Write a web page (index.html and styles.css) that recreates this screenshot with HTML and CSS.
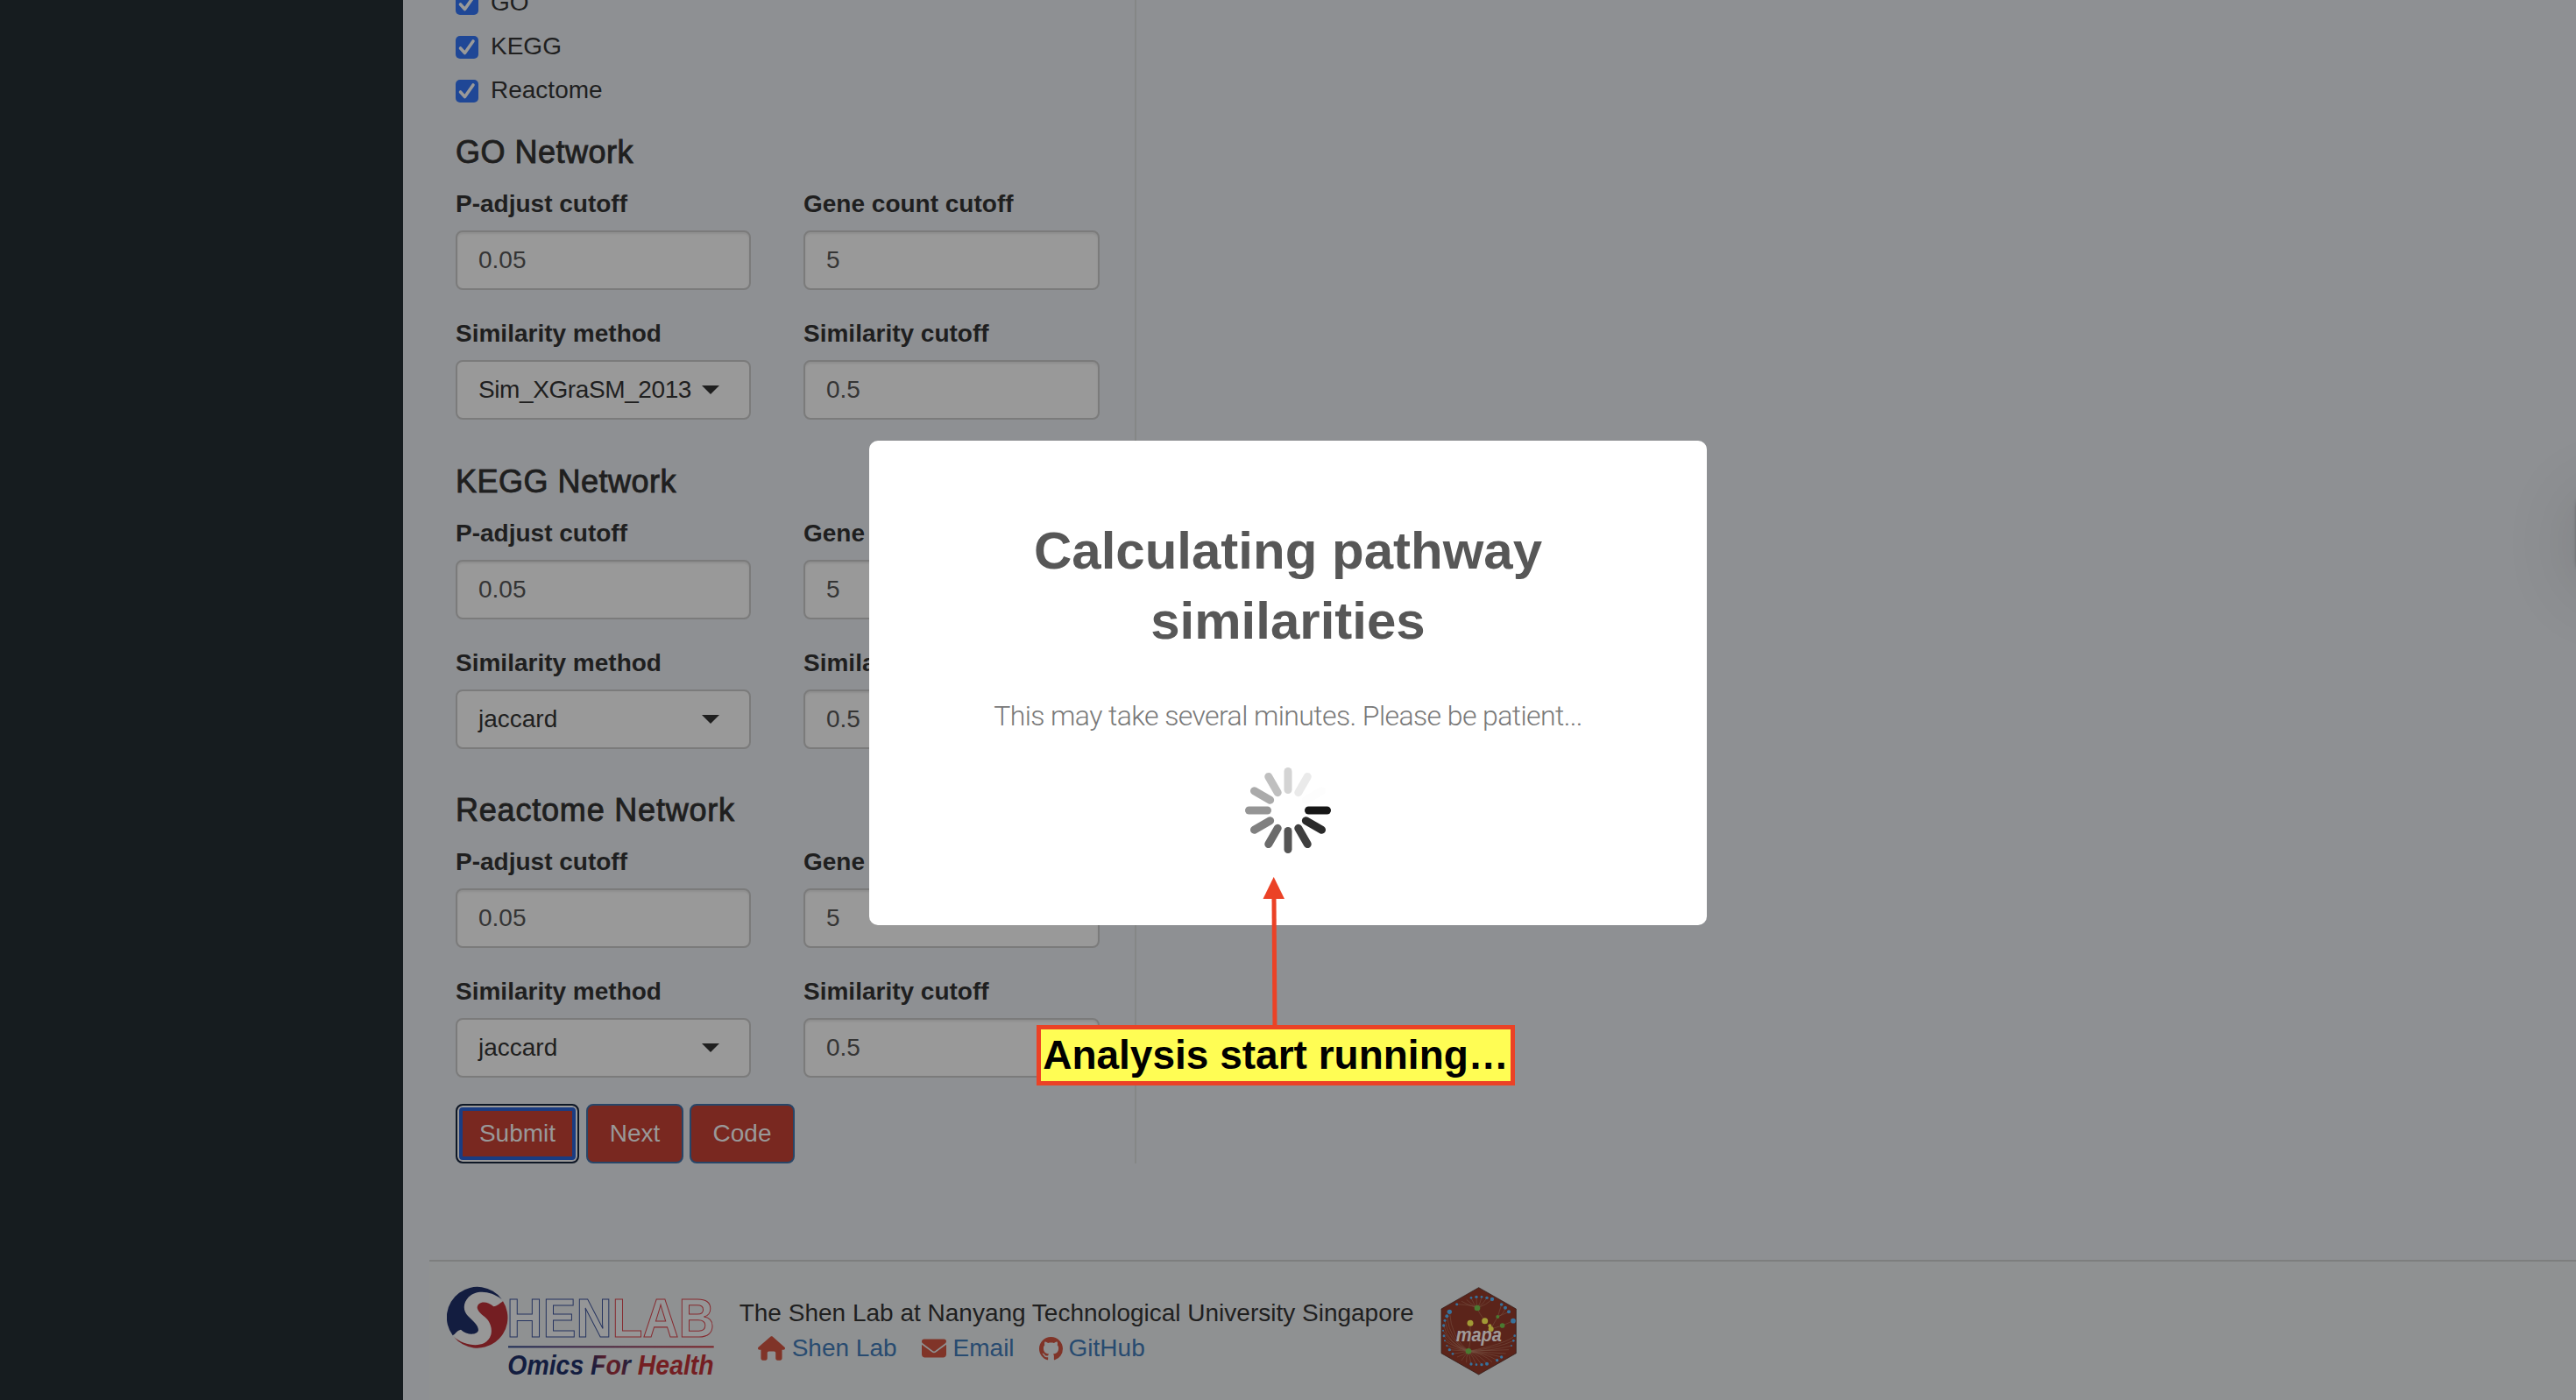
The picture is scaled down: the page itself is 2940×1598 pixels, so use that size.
FILE: index.html
```html
<!DOCTYPE html>
<html lang="en">
<head>
<meta charset="utf-8">
<title>MAPA</title>
<link rel="stylesheet" href="styles.css">
</head>
<body>
<div class="app">
  <aside class="sidebar"></aside>
  <main class="content">
    <div class="workspace">
      <form class="panel">
        <div class="checks">
          <label class="check"><svg class="box" viewBox="0 0 26 26"><path d="M5.500 14 10.500 19.500 20 6"/></svg>GO</label>
          <label class="check"><svg class="box" viewBox="0 0 26 26"><path d="M5.500 14 10.500 19.500 20 6"/></svg>KEGG</label>
          <label class="check"><svg class="box" viewBox="0 0 26 26"><path d="M5.500 14 10.500 19.500 20 6"/></svg>Reactome</label>
        </div>
        <section class="network">
          <h4>GO Network</h4>
          <div class="fields">
            <div class="field"><label>P-adjust cutoff</label><div class="input">0.05</div></div>
            <div class="field"><label>Gene count cutoff</label><div class="input">5</div></div>
            <div class="field"><label>Similarity method</label><div class="input select"><span class="tight">Sim_XGraSM_2013</span><i class="caret"></i></div></div>
            <div class="field"><label>Similarity cutoff</label><div class="input">0.5</div></div>
          </div>
        </section>
        <section class="network">
          <h4>KEGG Network</h4>
          <div class="fields">
            <div class="field"><label>P-adjust cutoff</label><div class="input">0.05</div></div>
            <div class="field"><label>Gene count cutoff</label><div class="input">5</div></div>
            <div class="field"><label>Similarity method</label><div class="input select"><span>jaccard</span><i class="caret"></i></div></div>
            <div class="field"><label>Similarity cutoff</label><div class="input">0.5</div></div>
          </div>
        </section>
        <section class="network">
          <h4 class="wide">Reactome Network</h4>
          <div class="fields">
            <div class="field"><label>P-adjust cutoff</label><div class="input">0.05</div></div>
            <div class="field"><label>Gene count cutoff</label><div class="input">5</div></div>
            <div class="field"><label>Similarity method</label><div class="input select"><span>jaccard</span><i class="caret"></i></div></div>
            <div class="field"><label>Similarity cutoff</label><div class="input">0.5</div></div>
          </div>
        </section>
        <div class="actions">
          <button type="button" class="btn submit">Submit</button>
          <button type="button" class="btn next">Next</button>
          <button type="button" class="btn code">Code</button>
        </div>
      </form>
    </div>
    <footer class="footer">
      <svg class="logo" viewBox="60 110 920 320">
        <defs>
          <linearGradient id="rule" gradientUnits="userSpaceOnUse" x1="270" y1="0" x2="974" y2="0"><stop offset="0" stop-color="#1c2b56"/><stop offset="1" stop-color="#7d2227"/></linearGradient>
          <linearGradient id="fade" gradientUnits="userSpaceOnUse" x1="560" y1="400" x2="690" y2="360"><stop offset="0" stop-color="#131d40"/><stop offset=".5" stop-color="#6d1f25"/><stop offset="1" stop-color="#131d40"/></linearGradient>
        </defs>
        <circle cx="166" cy="223" r="100" fill="#979797"/>
        <path fill="#131d40" d="M80 282A104 104 0 0 1 248 158C208 126 158 126 135 150C114 172 115 198 132 215C148 232 168 246 168 264C164 282 128 282 108 262C96 264 90 276 80 282Z"/>
        <path fill="#741e22" d="M252 165A104 104 0 0 1 84 287C112 312 160 322 188 308C216 292 220 258 201 230C190 215 168 206 164 188C164 164 198 162 220 183C232 182 242 172 252 165Z"/>
        <text class="wordmark" x="265" y="286" textLength="712" lengthAdjust="spacingAndGlyphs"><tspan class="navy">HEN</tspan><tspan class="crimson">LAB</tspan></text>
        <rect x="270" y="318" width="704" height="6" fill="url(#rule)"/>
        <text class="motto" x="268" y="415" textLength="706" lengthAdjust="spacingAndGlyphs"><tspan fill="#131d40">Omics </tspan><tspan fill="url(#fade)">For </tspan><tspan fill="#741e22">Health</tspan></text>
      </svg>
      <div class="about">
        <div class="org">The Shen Lab at Nanyang Technological University Singapore</div>
        <nav class="links">
          <a class="home"><svg viewBox="0 0 576 512"><path d="M575.800 255.500c0 18-15 32.100-32 32.100h-32l.7 160.200c0 2.700-.2 5.400-.5 8.100V472c0 22.100-17.900 40-40 40H416c-22.100 0-40-17.900-40-40V352c0-17.700-14.300-32-32-32H232c-17.700 0-32 14.300-32 32v120c0 22.100-17.900 40-40 40H104c-22.100 0-40-17.900-40-40V287.600H32c-18 0-32-14-32-32.100 0-9 3-17 10-24L266.400 8c7-7 15-8 22-8s15 2 21 7L564.800 231.500c8 7 12 15 11 24z"/></svg>Shen Lab</a>
          <a class="mail"><svg viewBox="0 0 512 512"><path d="M48 64C21.500 64 0 85.500 0 112c0 15.100 7.100 29.300 19.200 38.400L236.800 313.600c11.400 8.500 27 8.500 38.400 0L492.800 150.400c12.100-9.100 19.200-23.300 19.200-38.400 0-26.500-21.500-48-48-48H48zM0 176v208c0 35.300 28.700 64 64 64h384c35.300 0 64-28.700 64-64V176L294.400 339.200c-22.800 17.100-54 17.100-76.800 0L0 176z"/></svg>Email</a>
          <a class="git"><svg viewBox="0 0 16 16"><path d="M8 0C3.580 0 0 3.580 0 8c0 3.540 2.290 6.530 5.470 7.590.4.070.55-.17.55-.38 0-.19-.01-.82-.01-1.490-2.010.37-2.530-.49-2.690-.94-.09-.23-.48-.94-.82-1.130-.28-.15-.68-.52-.01-.53.63-.01 1.080.58 1.230.82.72 1.210 1.870.87 2.330.66.070-.52.28-.87.51-1.070-1.780-.2-3.640-.89-3.640-3.950 0-.87.31-1.590.82-2.150-.08-.2-.36-1.020.08-2.120 0 0 .67-.21 2.200.82.64-.18 1.320-.27 2-.27s1.360.09 2 .27c1.530-1.040 2.200-.82 2.200-.82.44 1.100.16 1.920.08 2.120.51.56.82 1.270.82 2.150 0 3.070-1.870 3.750-3.650 3.950.29.25.54.73.54 1.480 0 1.070-.01 1.930-.01 2.200 0 .21.15.46.55.38A8.010 8.010 0 0 0 16 8c0-4.420-3.580-8-8-8z"/></svg>GitHub</a>
        </nav>
      </div>
      <svg class="hex" viewBox="70 50 270 312">
        <path d="M204 58 332 131V283L204 356 76 283V131Z" fill="#5b241a" stroke="#2b1815" stroke-width="2"/>
        <g class="edges">
          <path d="M199 128Q190 118 129 115M199 128Q170 118 145 105M199 128Q175 112 162 99M199 128Q185 112 178 93M199 128Q196 110 196 90M199 128Q210 112 214 90M199 128Q222 112 232 93M199 128Q230 118 250 98M199 128 Q205 145 225 172M175 180V240L169 276M245 200 269 158 282 116M269 158 Q290 150 295 127M269 158 307 141M285 188 245 200M285 188 322 172"/>
          <path d="M169 276Q110 230 104 141M169 276Q105 240 95 156M169 276Q100 240 88 171M169 276Q100 250 84 188M169 276Q110 255 82 205M169 276Q110 260 85 223M169 276Q120 262 88 240M169 276Q120 268 95 257M169 276 104 271M169 276 115 285M169 276Q150 290 130 296M169 276Q150 300 145 308M169 276Q160 300 162 315M169 276Q174 300 178 320M169 276Q186 296 196 322M169 276Q200 296 214 322M169 276Q210 290 232 319M169 276Q220 284 250 313M169 276Q230 284 267 307M169 276Q240 284 282 296M169 276Q240 280 297 284M169 276 307 271M169 276Q250 275 316 257M169 276Q270 265 323 240M169 276Q300 250 327 223"/>
        </g>
        <g fill="#37729c"><circle cx="129" cy="115" r="4.500"/><circle cx="178" cy="93" r="4"/><circle cx="196" cy="90" r="5"/><circle cx="214" cy="90" r="4"/><circle cx="232" cy="93" r="5"/><circle cx="250" cy="98" r="6.500"/><circle cx="282" cy="116" r="5.500"/><circle cx="295" cy="127" r="6"/><circle cx="307" cy="141" r="6"/><circle cx="322" cy="172" r="8.500"/><circle cx="104" cy="141" r="8"/><circle cx="95" cy="156" r="6"/><circle cx="88" cy="171" r="4.500"/><circle cx="84" cy="188" r="5"/><circle cx="82" cy="205" r="3"/><circle cx="85" cy="223" r="4.500"/><circle cx="88" cy="240" r="3"/><circle cx="95" cy="257" r="3"/><circle cx="104" cy="271" r="5"/><circle cx="115" cy="285" r="4"/><circle cx="178" cy="320" r="5"/><circle cx="196" cy="322" r="4"/><circle cx="214" cy="322" r="5"/><circle cx="232" cy="319" r="6"/><circle cx="267" cy="307" r="5"/><circle cx="282" cy="296" r="5"/><circle cx="316" cy="257" r="3"/><circle cx="323" cy="240" r="4"/><circle cx="327" cy="223" r="4"/></g>
        <g fill="#4a7a31"><circle cx="199" cy="128" r="10"/><circle cx="269" cy="158" r="6"/><circle cx="285" cy="188" r="8.500"/><circle cx="169" cy="276" r="10"/></g>
        <g fill="#a29b35"><circle cx="175" cy="180" r="10.500"/><circle cx="225" cy="172" r="10.500"/><circle cx="242" cy="189" r="6"/><circle cx="246" cy="200" r="9"/></g>
        <text x="126" y="242" textLength="157" lengthAdjust="spacingAndGlyphs">mapa</text>
      </svg>
    </footer>
  </main>
</div>

<div class="edge-shadow"></div>

<div class="modal">
  <h2>Calculating pathway<br>similarities</h2>
  <p>This may take several minutes. Please be patient...</p>
  <svg class="spinner" viewBox="-49 -49 98 98">
    <rect x="19" y="-4.500" width="30" height="9" rx="4.500" fill="#161616"/>
    <rect x="19" y="-4.500" width="30" height="9" rx="4.500" fill="#2a2a2a" transform="rotate(30)"/>
    <rect x="19" y="-4.500" width="30" height="9" rx="4.500" fill="#3f3f3f" transform="rotate(60)"/>
    <rect x="19" y="-4.500" width="30" height="9" rx="4.500" fill="#555" transform="rotate(90)"/>
    <rect x="19" y="-4.500" width="30" height="9" rx="4.500" fill="#6b6b6b" transform="rotate(120)"/>
    <rect x="19" y="-4.500" width="30" height="9" rx="4.500" fill="#808080" transform="rotate(150)"/>
    <rect x="19" y="-4.500" width="30" height="9" rx="4.500" fill="#959595" transform="rotate(180)"/>
    <rect x="19" y="-4.500" width="30" height="9" rx="4.500" fill="#aaa" transform="rotate(210)"/>
    <rect x="19" y="-4.500" width="30" height="9" rx="4.500" fill="#bfbfbf" transform="rotate(240)"/>
    <rect x="19" y="-4.500" width="30" height="9" rx="4.500" fill="#d4d4d4" transform="rotate(270)"/>
    <rect x="19" y="-4.500" width="30" height="9" rx="4.500" fill="#eaeaea" transform="rotate(300)"/>
    <rect x="19" y="-4.500" width="30" height="9" rx="4.500" fill="#fdfdfd" transform="rotate(330)"/>
  </svg>
</div>

<svg class="arrow" viewBox="0 0 26 172"><path d="M13 24 14 172" stroke="#eb4226" stroke-width="5"/><path d="M12.700 0 25 25H.5Z" fill="#eb4226"/></svg>
<div class="callout">Analysis start running…</div>
</body>
</html>
```

FILE: styles.css
```css
* { box-sizing: border-box; }

body {
  margin: 0;
  height: 1598px;
  overflow: hidden;
  position: relative;
  background: #8e9093;
  color: #1f1f1f;
  font: 28px/40px "Liberation Sans", Arial, sans-serif;
}

.app { display: flex; height: 1598px; }
.sidebar { width: 460px; flex: none; background: #161c1f; }
.content { flex: 1; display: flex; flex-direction: column; min-width: 0; }
.workspace { height: 1438px; flex: none; overflow: hidden; padding-left: 60px; }

.panel {
  width: 777px;
  height: 1345px;
  margin-top: -17px;
  border-right: 2px solid #858786;
}

.checks { display: flex; flex-direction: column; gap: 10px; margin-bottom: 31px; }
.check { display: flex; align-items: center; gap: 14px; height: 40px; }
.box { width: 26px; height: 26px; border-radius: 5px; background: #1f4796; margin-top: 2px; }
.box path { fill: none; stroke: #999; stroke-width: 3.6; stroke-linecap: round; stroke-linejoin: round; }

.network { height: 345.5px; margin-bottom: 30px; }
.network h4 {
  margin: 0 0 19px;
  font-size: 36px;
  line-height: 40px;
  font-weight: 400;
  letter-spacing: .5px;
  -webkit-text-stroke: .9px #1f1f1f;
}
.network h4.wide { letter-spacing: .8px; }
.network:last-of-type { height: 325px; }
.fields { display: grid; grid-template-columns: 337px 338px; column-gap: 60px; row-gap: 30px; }
.field label { display: block; margin-bottom: 10px; font-weight: 700; white-space: nowrap; }
.input {
  height: 68px;
  padding: 12px 24px;
  border: 2px solid #7b7b7b;
  border-radius: 8px;
  background: #999;
  color: #353535;
  box-shadow: inset 0 2px 2px rgba(0, 0, 0, .075);
}
.select {
  display: flex;
  align-items: center;
  justify-content: space-between;
  padding-right: 34px;
  color: #1f1f1f;
  box-shadow: none;
}
.tight { letter-spacing: -.4px; }
.caret { border: 10px solid transparent; border-top-color: #1f1f1f; border-bottom: 0; }

.actions { display: flex; }
.btn {
  height: 68px;
  padding: 0;
  border: 2px solid #284567;
  border-radius: 8px;
  background: #792820;
  color: #999;
  font: inherit;
}
.submit {
  width: 141px;
  margin-right: 8px;
  border-color: #0e1826;
  box-shadow: inset 0 0 0 2px #999, inset 0 0 0 6px #1a3c82;
}
.next { width: 111px; margin-right: 7px; }
.code { width: 120px; }

.footer {
  flex: 1;
  margin-left: 30px;
  border-top: 2px solid #7d7e7e;
  background: #8f9192;
  display: flex;
  align-items: flex-start;
  padding: 27px 0 0 20px;
}
.logo { width: 306.700px; height: 106.700px; flex: none; }
.wordmark { font: 700 187px "Liberation Sans", Arial, sans-serif; fill: #959697; stroke-width: 3.200; }
.navy { stroke: #25335f; }
.crimson { stroke: #872a2f; }
.motto { font: italic 700 95px "Liberation Sans", Arial, sans-serif; }

.about { margin: 12px 0 0 27px; width: 772px; }
.org { white-space: nowrap; }
.links { display: flex; padding-left: 21px; color: #284b70; }
.links a { display: flex; align-items: center; white-space: nowrap; }
.links svg { fill: #803428; flex: none; }
.home { margin-right: 28px; }
.home svg { width: 31px; height: 28px; margin-right: 8px; }
.mail { margin-right: 28px; }
.mail svg { width: 28px; height: 28px; margin-right: 8px; }
.git svg { width: 27px; height: 27px; margin-right: 7px; }

.hex { width: 90px; height: 104px; flex: none; margin-left: 27px; }
.hex text { font: italic 700 68px "Liberation Sans", Arial, sans-serif; fill: #a09b9a; }
.edges { fill: none; stroke: #80604f; stroke-width: 1.6; opacity: .8; }

.edge-shadow {
  position: absolute;
  left: 2941px;
  top: 560px;
  width: 100px;
  height: 100px;
  border-radius: 20px;
  box-shadow: 0 0 4px rgba(0, 0, 0, .4), 0 10px 80px 8px rgba(0, 20, 20, .1);
}

.modal {
  position: absolute;
  left: 992px;
  top: 503px;
  width: 956px;
  height: 553px;
  border-radius: 10px;
  background: #fff;
  display: flex;
  flex-direction: column;
  align-items: center;
  text-align: center;
}
.modal h2 { margin: 86px 0 0; font-size: 60px; line-height: 80px; font-weight: 700; color: #575757; }
.modal p {
  margin: 48px 0 0;
  font: 300 32px/40px Roboto, "Liberation Sans", sans-serif;
  letter-spacing: -.6px;
  color: #797979;
  white-space: nowrap;
}
.spinner { width: 98px; height: 98px; margin-top: 39px; }

.arrow { position: absolute; left: 1441px; top: 1001px; width: 26px; height: 172px; }
.callout {
  position: absolute;
  left: 1183px;
  top: 1170px;
  width: 546px;
  height: 69px;
  border: 5px solid #eb4226;
  background: #fffd54;
  color: #000;
  font-size: 46px;
  line-height: 58px;
  font-weight: 700;
  text-align: center;
  white-space: nowrap;
}
```
